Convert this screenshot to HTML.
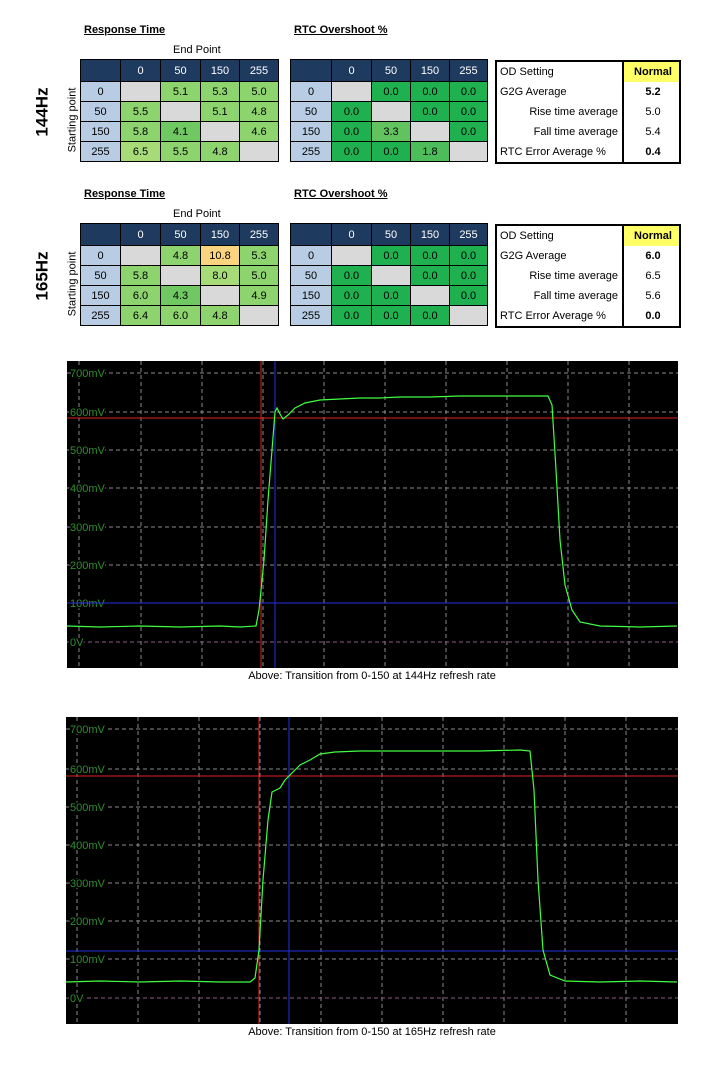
<!DOCTYPE html><html><head><style>
body{margin:0;width:709px;height:1075px;background:#fff;position:relative;font-family:"Liberation Sans",sans-serif;overflow:hidden}
.a{position:absolute}
.h{font-size:11px;font-weight:bold;text-decoration:underline;color:#000}
table{border-collapse:collapse;position:absolute;font-size:11px;table-layout:fixed}
td{border:1px solid #000;height:19px;text-align:center;padding:0}
.hd td{background:#1f3a5f;color:#fff;height:21px}
.b{background:#b8cce4}.g{background:#d9d9d9}
.l1{background:#8ed46e}.l2{background:#a6db78}.l0{background:#70c862}.o{background:#fbd47f}
.d0{background:#1fb04f}.d1{background:#4dbc5a}.d2{background:#62c35e}
.rt{border:2px solid #000;border-collapse:collapse}
.rt td{border:none;text-align:left;padding-left:3px;height:20px}
.rt td.v{border-left:2px solid #000;text-align:center;width:52px}
.hz{font-size:17px;font-weight:bold;transform:rotate(-90deg);transform-origin:center}
.sp{font-size:11px;transform:rotate(-90deg)}
</style></head><body>

<div class="a h" style="left:84px;top:24px">Response Time</div>
<div class="a h" style="left:294px;top:24px">RTC Overshoot %</div>
<div class="a" style="left:173px;top:44px;font-size:11px">End Point</div>
<div class="a hz" style="left:18px;top:102px">144Hz</div>
<div class="a sp" style="left:40px;top:114px">Starting point</div>
<table style="left:80px;top:59px;width:198px"><colgroup><col style="width:40px"><col style="width:40px"><col style="width:40px"><col style="width:39px"><col style="width:39px"></colgroup>
<tr class="hd"><td></td><td>0</td><td>50</td><td>150</td><td>255</td></tr>
<tr><td class="b">0</td><td class="g"></td><td class="l1">5.1</td><td class="l1">5.3</td><td class="l1">5.0</td></tr>
<tr><td class="b">50</td><td class="l1">5.5</td><td class="g"></td><td class="l1">5.1</td><td class="l1">4.8</td></tr>
<tr><td class="b">150</td><td class="l1">5.8</td><td class="l0">4.1</td><td class="g"></td><td class="l1">4.6</td></tr>
<tr><td class="b">255</td><td class="l2">6.5</td><td class="l1">5.5</td><td class="l1">4.8</td><td class="g"></td></tr></table>
<table style="left:290px;top:59px;width:197px"><colgroup><col style="width:41px"><col style="width:40px"><col style="width:39px"><col style="width:39px"><col style="width:38px"></colgroup>
<tr class="hd"><td></td><td>0</td><td>50</td><td>150</td><td>255</td></tr>
<tr><td class="b">0</td><td class="g"></td><td class="d0">0.0</td><td class="d0">0.0</td><td class="d0">0.0</td></tr>
<tr><td class="b">50</td><td class="d0">0.0</td><td class="g"></td><td class="d0">0.0</td><td class="d0">0.0</td></tr>
<tr><td class="b">150</td><td class="d0">0.0</td><td class="d2">3.3</td><td class="g"></td><td class="d0">0.0</td></tr>
<tr><td class="b">255</td><td class="d0">0.0</td><td class="d0">0.0</td><td class="d1">1.8</td><td class="g"></td></tr></table>
<table class="rt" style="left:495px;top:60px;width:186px">
<tr><td>OD Setting</td><td class="v" style="background:#ffff66;font-weight:bold">Normal</td></tr>
<tr><td>G2G Average</td><td class="v"><b>5.2</b></td></tr>
<tr><td style="text-align:right;padding-right:4px">Rise time average</td><td class="v">5.0</td></tr>
<tr><td style="text-align:right;padding-right:4px">Fall time average</td><td class="v">5.4</td></tr>
<tr><td>RTC Error Average %</td><td class="v"><b>0.4</b></td></tr></table>

<div class="a h" style="left:84px;top:188px">Response Time</div>
<div class="a h" style="left:294px;top:188px">RTC Overshoot %</div>
<div class="a" style="left:173px;top:208px;font-size:11px">End Point</div>
<div class="a hz" style="left:18px;top:266px">165Hz</div>
<div class="a sp" style="left:40px;top:278px">Starting point</div>
<table style="left:80px;top:223px;width:198px"><colgroup><col style="width:40px"><col style="width:40px"><col style="width:40px"><col style="width:39px"><col style="width:39px"></colgroup>
<tr class="hd"><td></td><td>0</td><td>50</td><td>150</td><td>255</td></tr>
<tr><td class="b">0</td><td class="g"></td><td class="l1">4.8</td><td class="o">10.8</td><td class="l1">5.3</td></tr>
<tr><td class="b">50</td><td class="l1">5.8</td><td class="g"></td><td class="l2">8.0</td><td class="l1">5.0</td></tr>
<tr><td class="b">150</td><td class="l1">6.0</td><td class="l0">4.3</td><td class="g"></td><td class="l1">4.9</td></tr>
<tr><td class="b">255</td><td class="l1">6.4</td><td class="l1">6.0</td><td class="l1">4.8</td><td class="g"></td></tr></table>
<table style="left:290px;top:223px;width:197px"><colgroup><col style="width:41px"><col style="width:40px"><col style="width:39px"><col style="width:39px"><col style="width:38px"></colgroup>
<tr class="hd"><td></td><td>0</td><td>50</td><td>150</td><td>255</td></tr>
<tr><td class="b">0</td><td class="g"></td><td class="d0">0.0</td><td class="d0">0.0</td><td class="d0">0.0</td></tr>
<tr><td class="b">50</td><td class="d0">0.0</td><td class="g"></td><td class="d0">0.0</td><td class="d0">0.0</td></tr>
<tr><td class="b">150</td><td class="d0">0.0</td><td class="d0">0.0</td><td class="g"></td><td class="d0">0.0</td></tr>
<tr><td class="b">255</td><td class="d0">0.0</td><td class="d0">0.0</td><td class="d0">0.0</td><td class="g"></td></tr></table>
<table class="rt" style="left:495px;top:224px;width:186px">
<tr><td>OD Setting</td><td class="v" style="background:#ffff66;font-weight:bold">Normal</td></tr>
<tr><td>G2G Average</td><td class="v"><b>6.0</b></td></tr>
<tr><td style="text-align:right;padding-right:4px">Rise time average</td><td class="v">6.5</td></tr>
<tr><td style="text-align:right;padding-right:4px">Fall time average</td><td class="v">5.6</td></tr>
<tr><td>RTC Error Average %</td><td class="v"><b>0.0</b></td></tr></table>

<svg class="a" style="left:0;top:0" width="709" height="1075" font-family="Liberation Sans" font-size="11">
<rect x="67" y="361" width="611" height="307" fill="#000"/>
<g stroke="#8a8a8a" stroke-dasharray="4,3" stroke-width="1">
<path d="M79 361V668M141 361V668M202 361V668M263 361V668M324 361V668M385 361V668M446 361V668M507 361V668M568 361V668M629 361V668"/>
<path d="M67 373H678M67 412H678M67 450H678M67 488H678M67 527H678M67 565H678M67 603H678"/>
</g>
<path d="M67 642H678" stroke="#8a5a8a" stroke-dasharray="4,3"/>
<g fill="#2f8f2f" stroke="#000" stroke-width="3" paint-order="stroke"><text x="70" y="377">700mV</text><text x="70" y="416">600mV</text><text x="70" y="454">500mV</text><text x="70" y="492">400mV</text><text x="70" y="531">300mV</text><text x="70" y="569">200mV</text><text x="70" y="607">100mV</text><text x="70" y="646">0V</text></g>
<path d="M67 418H678M261 361V668" stroke="#e02020"/>
<path d="M67 603H678M275 361V668" stroke="#2030e0"/>
<polyline fill="none" stroke="#40ff40" stroke-width="1.2" points="67,626 100,627 140,626 180,627 220,626 240,627 256,626 259,610 264,560 268,500 272,450 275,412 277,408 280,414 283,419 288,415 295,408 305,403 320,400 340,399 360,398 380,398 400,397 430,397 460,396 490,396 520,396 548,396 552,405 556,470 560,540 565,585 572,610 580,622 600,626 640,627 677,626"/>
<text x="372" y="679" fill="#000" text-anchor="middle">Above: Transition from 0-150 at 144Hz refresh rate</text>

<rect x="66" y="717" width="612" height="307" fill="#000"/>
<g stroke="#8a8a8a" stroke-dasharray="4,3" stroke-width="1">
<path d="M77 717V1024M138 717V1024M199 717V1024M260 717V1024M321 717V1024M382 717V1024M443 717V1024M504 717V1024M565 717V1024M626 717V1024"/>
<path d="M66 729H678M66 769H678M66 807H678M66 845H678M66 883H678M66 921H678M66 959H678"/>
</g>
<path d="M66 998H678" stroke="#8a5a8a" stroke-dasharray="4,3"/>
<g fill="#2f8f2f" stroke="#000" stroke-width="3" paint-order="stroke"><text x="70" y="733">700mV</text><text x="70" y="773">600mV</text><text x="70" y="811">500mV</text><text x="70" y="849">400mV</text><text x="70" y="887">300mV</text><text x="70" y="925">200mV</text><text x="70" y="963">100mV</text><text x="70" y="1002">0V</text></g>
<path d="M66 776H678M259 717V1024" stroke="#e02020"/>
<path d="M66 951H678M289 717V1024" stroke="#2030e0"/>
<polyline fill="none" stroke="#40ff40" stroke-width="1.2" points="66,982 100,981 140,982 180,981 220,982 250,982 255,978 259,950 263,880 268,820 272,792 276,790 280,788 285,780 290,775 300,765 310,760 320,754 335,752 360,751 400,751 440,751 480,751 520,750 530,751 534,790 538,880 543,950 550,975 565,981 600,982 640,981 677,982"/>
<text x="372" y="1035" fill="#000" text-anchor="middle">Above: Transition from 0-150 at 165Hz refresh rate</text>
</svg>
</body></html>
